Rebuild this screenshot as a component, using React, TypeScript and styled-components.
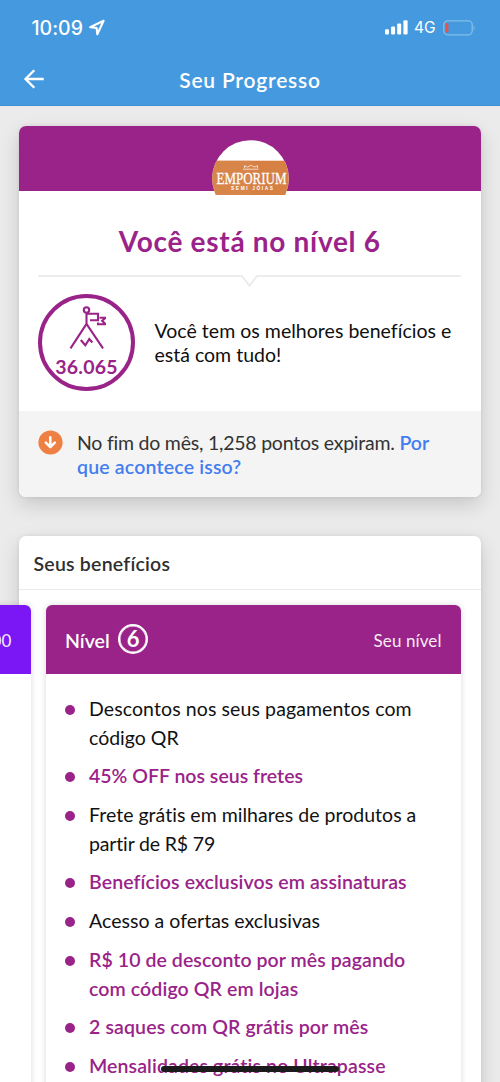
import React from "react";
import styled, { createGlobalStyle } from "styled-components";

const purple = "#9a2389";
const fontStack = `Lato, "Open Sans", sans-serif`;

const GlobalStyle = createGlobalStyle`
  * { box-sizing: border-box; }
  body {
    margin: 0;
    background: #ebebeb;
    font-family: ${fontStack};
    font-variant-ligatures: none;
    -webkit-font-smoothing: antialiased;
  }
`;

const Screen = styled.div`
  width: 500px;
  height: 1082px;
  overflow: hidden;
  position: relative;
  background: #ebebeb;
  color: #0f0f0f;
`;

const TopBar = styled.header`
  height: 106px;
  background: #4599de;
  color: #fff;
  border-bottom: 1px solid #4091d3;
`;

const StatusBar = styled.div`
  height: 53px;
  padding: 2px 25px 0 31.5px;
  display: flex;
  align-items: center;
  font-family: Inter, sans-serif;
`;

const Clock = styled.span`
  font-size: 19.5px;
  font-weight: 500;
  width: 57px;
  white-space: nowrap;
`;

const Network = styled.span`
  font-size: 15.5px;
  margin: 0 7px 0 6px;
  width: 22px;
`;

const Spacer = styled.span`
  flex: 1;
`;

const NavBar = styled.div`
  height: 52px;
  display: grid;
  grid-template-columns: 60px 1fr 60px;
  align-items: center;
`;

const BackButton = styled.button`
  border: 0;
  padding: 0 0 0 22.5px;
  background: none;
  display: flex;
`;

const Title = styled.h1`
  margin: 1px 0 0;
  font-size: 21px;
  line-height: 26px;
  font-weight: 600;
  text-align: center;
  letter-spacing: 0.78px;
`;

const Content = styled.main`
  padding: 19.5px 19.5px 0 19px;
  display: flex;
  flex-direction: column;
  gap: 38.5px;
`;

const Card = styled.section`
  border-radius: 7px;
  background: #fff;
  box-shadow: 0 8px 20px rgba(0, 0, 0, 0.15), 0 0 4px rgba(0, 0, 0, 0.08);
`;

const Cover = styled.div`
  height: 65.5px;
  background: ${purple};
  border-radius: 7px 7px 0 0;
  display: flex;
  justify-content: center;
  padding: 14px 0 0 1px;
  svg { flex: none; }
`;

const LevelTitle = styled.h2`
  margin: 0;
  padding-top: 32px;
  height: 84px;
  font-size: 28px;
  line-height: 36px;
  font-weight: 700;
  letter-spacing: 0.7px;
  text-align: center;
  color: ${purple};
`;

const Divider = styled.svg`
  display: block;
  margin: 0 auto;
`;

const Summary = styled.div`
  display: flex;
  align-items: center;
  height: 123.5px;
  padding: 0 19px 11px;
  gap: 19.5px;
`;

const Badge = styled.div`
  width: 97px;
  height: 97px;
  margin-top: -1px;
  border: 4px solid ${purple};
  border-radius: 50%;
  color: ${purple};
  display: flex;
  flex-direction: column;
  align-items: center;
  padding-top: 7px;
  font-size: 19.5px;
  line-height: 24px;
  font-weight: 700;
  letter-spacing: 0.2px;
  svg { margin-bottom: 5.5px; }
`;

const Paragraph = styled.p`
  margin: 0;
  font-size: 19.5px;
  line-height: 24.3px;
`;

const Line = styled.span<{ $spacing?: number }>`
  display: block;
  white-space: nowrap;
  letter-spacing: ${(p) => p.$spacing ?? 0}px;
`;

const Run = styled.span<{ $spacing?: number }>`
  letter-spacing: ${(p) => p.$spacing ?? 0}px;
`;

const Notice = styled.div`
  display: flex;
  gap: 14px;
  height: 86.5px;
  padding: 19.5px 19px 0;
  background: #f4f4f4;
  color: #333;
  border-radius: 0 0 7px 7px;
  svg { flex: none; margin-top: -0.5px; }
  p { padding-top: 1px; }
`;

const Link = styled.a<{ $spacing?: number }>`
  color: #437df0;
  font-weight: 600;
  letter-spacing: ${(p) => p.$spacing ?? 0}px;
`;

const SectionTitle = styled.h3`
  margin: 0;
  height: 54.5px;
  padding: 1px 14.5px 0;
  line-height: 54px;
  border-bottom: 1.5px solid #ebebeb;
  font-size: 19.5px;
  font-weight: 600;
  letter-spacing: 0.22px;
  color: #2f2f2f;
`;

const Carousel = styled.div`
  display: flex;
  gap: 14.5px;
  margin: 14.5px 0 0 -403.5px;
`;

const LevelCard = styled.article`
  flex: none;
  width: 415.5px;
  height: 560px;
  border-radius: 6px 6px 0 0;
  background: #fff;
  box-shadow: 0 0 6px rgba(0, 0, 0, 0.15);
`;

const LevelHeader = styled.div<{ $color: string }>`
  height: 69px;
  padding: 2px 19.5px 0 19.5px;
  border-radius: 6px 6px 0 0;
  background: ${(p) => p.$color};
  color: #fff;
  display: flex;
  align-items: center;
  justify-content: space-between;
`;

const LevelName = styled.div`
  display: flex;
  align-items: center;
  gap: 8.5px;
  font-size: 19.5px;
  font-weight: 600;
`;

const LevelNumber = styled.span`
  width: 30px;
  height: 30px;
  margin-top: -2px;
  border: 2px solid #fff;
  box-shadow: inset 0 0 0 0.5px #fff;
  border-radius: 50%;
  font-size: 22px;
  line-height: 26px;
  font-weight: 700;
  text-align: center;
`;

const LevelStatus = styled.span`
  font-size: 17px;
  letter-spacing: 0.1px;
  opacity: 0.92;
`;

const Benefits = styled.ul`
  list-style: none;
  margin: 0;
  padding: 20px 19.5px 0;
  display: flex;
  flex-direction: column;
  gap: 9.65px;
  font-size: 19.5px;
  line-height: 29px;
`;

const Benefit = styled.li<{ $strong?: boolean }>`
  display: flex;
  gap: 14px;
  color: ${(p) => (p.$strong ? purple : "#111")};
  font-weight: ${(p) => (p.$strong ? 600 : 400)};
  &::before {
    content: "";
    flex: none;
    width: 10px;
    height: 10px;
    margin-top: 11px;
    border-radius: 50%;
    background: ${purple};
  }
`;

const HomeIndicator = styled.div`
  position: absolute;
  left: 161px;
  top: 1066px;
  width: 178px;
  height: 6px;
  border-radius: 3px;
  background: #1b1b1b;
`;

const benefits: { strong?: boolean; lines: [string, number][] }[] = [
  { lines: [["Descontos nos seus pagamentos com", 0.1], ["código QR", 0]] },
  { strong: true, lines: [["45% OFF nos seus fretes", 0]] },
  { lines: [["Frete grátis em milhares de produtos a", 0.02], ["partir de R$ 79", -0.15]] },
  { strong: true, lines: [["Benefícios exclusivos em assinaturas", 0.1]] },
  { lines: [["Acesso a ofertas exclusivas", 0.03]] },
  { strong: true, lines: [["R$ 10 de desconto por mês pagando", 0.07], ["com código QR em lojas", 0.11]] },
  { strong: true, lines: [["2 saques com QR grátis por mês", 0.13]] },
  { strong: true, lines: [["Mensalidades grátis no Ultrapasse", 0.11]] },
];

const LocationIcon = () => (
  <svg width="17" height="17" viewBox="0 0 17 17" fill="none" stroke="#fff" strokeWidth="2.1" strokeLinejoin="round">
    <path d="M1.2 8.3 14.6 1.8 8.3 15.2 7.6 9Z" />
  </svg>
);

const SignalIcon = () => (
  <svg width="23" height="15" viewBox="0 0 23 15" fill="#fff">
    <rect x="0" y="9.2" width="4" height="5.3" rx="1.1" />
    <rect x="6.1" y="6.6" width="4" height="7.9" rx="1.1" />
    <rect x="12.2" y="3.5" width="4" height="11" rx="1.1" />
    <rect x="18.4" y="0.2" width="4.2" height="14.3" rx="1.1" />
  </svg>
);

const BatteryIcon = () => (
  <svg width="32" height="16" viewBox="0 0 32 16" fill="none">
    <rect x="0.8" y="0.8" width="28.4" height="14" rx="4" stroke="#82bfe8" strokeWidth="1.3" />
    <rect x="2.8" y="3" width="2.6" height="9.6" rx="1" fill="#e2544f" />
    <path d="M30.6 5.6c1.4.8 1.4 3.8 0 4.6Z" fill="#82bfe8" />
  </svg>
);

const BackIcon = () => (
  <svg width="22" height="20" viewBox="0 0 22 20" fill="none" stroke="#fff" strokeWidth="2.3">
    <path d="M20.7 10H3M11.3 1.2 2.5 10l8.8 8.8" />
  </svg>
);

const StoreLogo = () => (
  <svg width="77" height="55" viewBox="0 0 77 55">
    <clipPath id="logo-circle">
      <circle cx="38.5" cy="38.5" r="38.3" />
    </clipPath>
    <g clipPath="url(#logo-circle)">
      <rect width="77" height="55" fill="#fff" />
      <rect y="20.7" width="77" height="34.3" fill="#d68044" />
      <path d="M0 20.7h39v34.3H0z" fill="#da8a50" opacity=".5" />
      <path d="M32.5 28v-2.3l3 1.4 3.5-1.8 3.5 1.8 3-1.4V28M31 29.2h15.5" fill="none" stroke="#fff" strokeWidth=".7" />
      <text x="4.5" y="44" fontFamily="Liberation Serif, serif" fontSize="17.5" textLength="70" lengthAdjust="spacingAndGlyphs" fill="#fff" stroke="#fff" strokeWidth=".3">
        EMPORIUM
      </text>
      <text x="19" y="50" fontFamily="Liberation Sans, sans-serif" fontWeight="700" fontSize="4.8" textLength="42" fill="#fff">
        SEMI JÓIAS
      </text>
    </g>
  </svg>
);

const MountainIcon = () => (
  <svg width="38" height="44" viewBox="0 0 38 44" fill="none" stroke={purple} strokeWidth="2.1">
    <circle cx="18.5" cy="5" r="2.7" />
    <path d="M18.5 8v11M2.5 43.3 18.5 19 35 43.3" />
    <path d="M19 8.8h11v6.5h-8M31.5 12.7h6l-3.3 3 3.3 3.6H30v-1.8" />
    <path d="m12.8 35 4.5 5.3 4-6.3 3 3.5" />
  </svg>
);

const ExpireIcon = () => (
  <svg width="25" height="25" viewBox="0 0 25 25" fill="none">
    <circle cx="12.5" cy="12.5" r="12.1" fill="#ef8044" />
    <path d="M12.3 7.2v9.6M7.8 12.7l4.5 4.3 4.5-4.3" stroke="#fff" strokeWidth="2.5" strokeLinecap="round" strokeLinejoin="round" />
  </svg>
);

export default function App() {
  return (
    <Screen>
      <GlobalStyle />
      <TopBar>
        <StatusBar>
          <Clock>10:09</Clock>
          <LocationIcon />
          <Spacer />
          <SignalIcon />
          <Network>4G</Network>
          <BatteryIcon />
        </StatusBar>
        <NavBar>
          <BackButton aria-label="Voltar">
            <BackIcon />
          </BackButton>
          <Title>Seu Progresso</Title>
        </NavBar>
      </TopBar>
      <Content>
        <Card>
          <Cover>
            <StoreLogo />
          </Cover>
          <LevelTitle>Você está no nível 6</LevelTitle>
          <Divider width="423" height="12" viewBox="0 0 423 12" fill="none" stroke="#e8e8e8" strokeWidth="1.5">
            <path d="M0 1h204l7.5 9.7L219 1h204" />
          </Divider>
          <Summary>
            <Badge>
              <MountainIcon />
              36.065
            </Badge>
            <Paragraph>
              <Line $spacing={0.03}>Você tem os melhores benefícios e</Line>
              <Line>está com tudo!</Line>
            </Paragraph>
          </Summary>
          <Notice>
            <ExpireIcon />
            <Paragraph>
              <Line>
                <Run $spacing={-0.23}>No fim do mês, 1,258 pontos expiram. </Run>
                <Link>Por</Link>
              </Line>
              <Line>
                <Link $spacing={0.18}>que acontece isso?</Link>
              </Line>
            </Paragraph>
          </Notice>
        </Card>
        <Card>
          <SectionTitle>Seus benefícios</SectionTitle>
          <Carousel>
            <LevelCard>
              <LevelHeader $color="#7b16f5">
                <LevelName />
                <LevelStatus>6.500</LevelStatus>
              </LevelHeader>
            </LevelCard>
            <LevelCard>
              <LevelHeader $color={purple}>
                <LevelName>
                  Nível <LevelNumber>6</LevelNumber>
                </LevelName>
                <LevelStatus>Seu nível</LevelStatus>
              </LevelHeader>
              <Benefits>
                {benefits.map((b) => (
                  <Benefit key={b.lines[0][0]} $strong={b.strong}>
                    <div>
                      {b.lines.map(([text, spacing]) => (
                        <Line key={text} $spacing={spacing}>
                          {text}
                        </Line>
                      ))}
                    </div>
                  </Benefit>
                ))}
              </Benefits>
            </LevelCard>
          </Carousel>
        </Card>
      </Content>
      <HomeIndicator />
    </Screen>
  );
}
